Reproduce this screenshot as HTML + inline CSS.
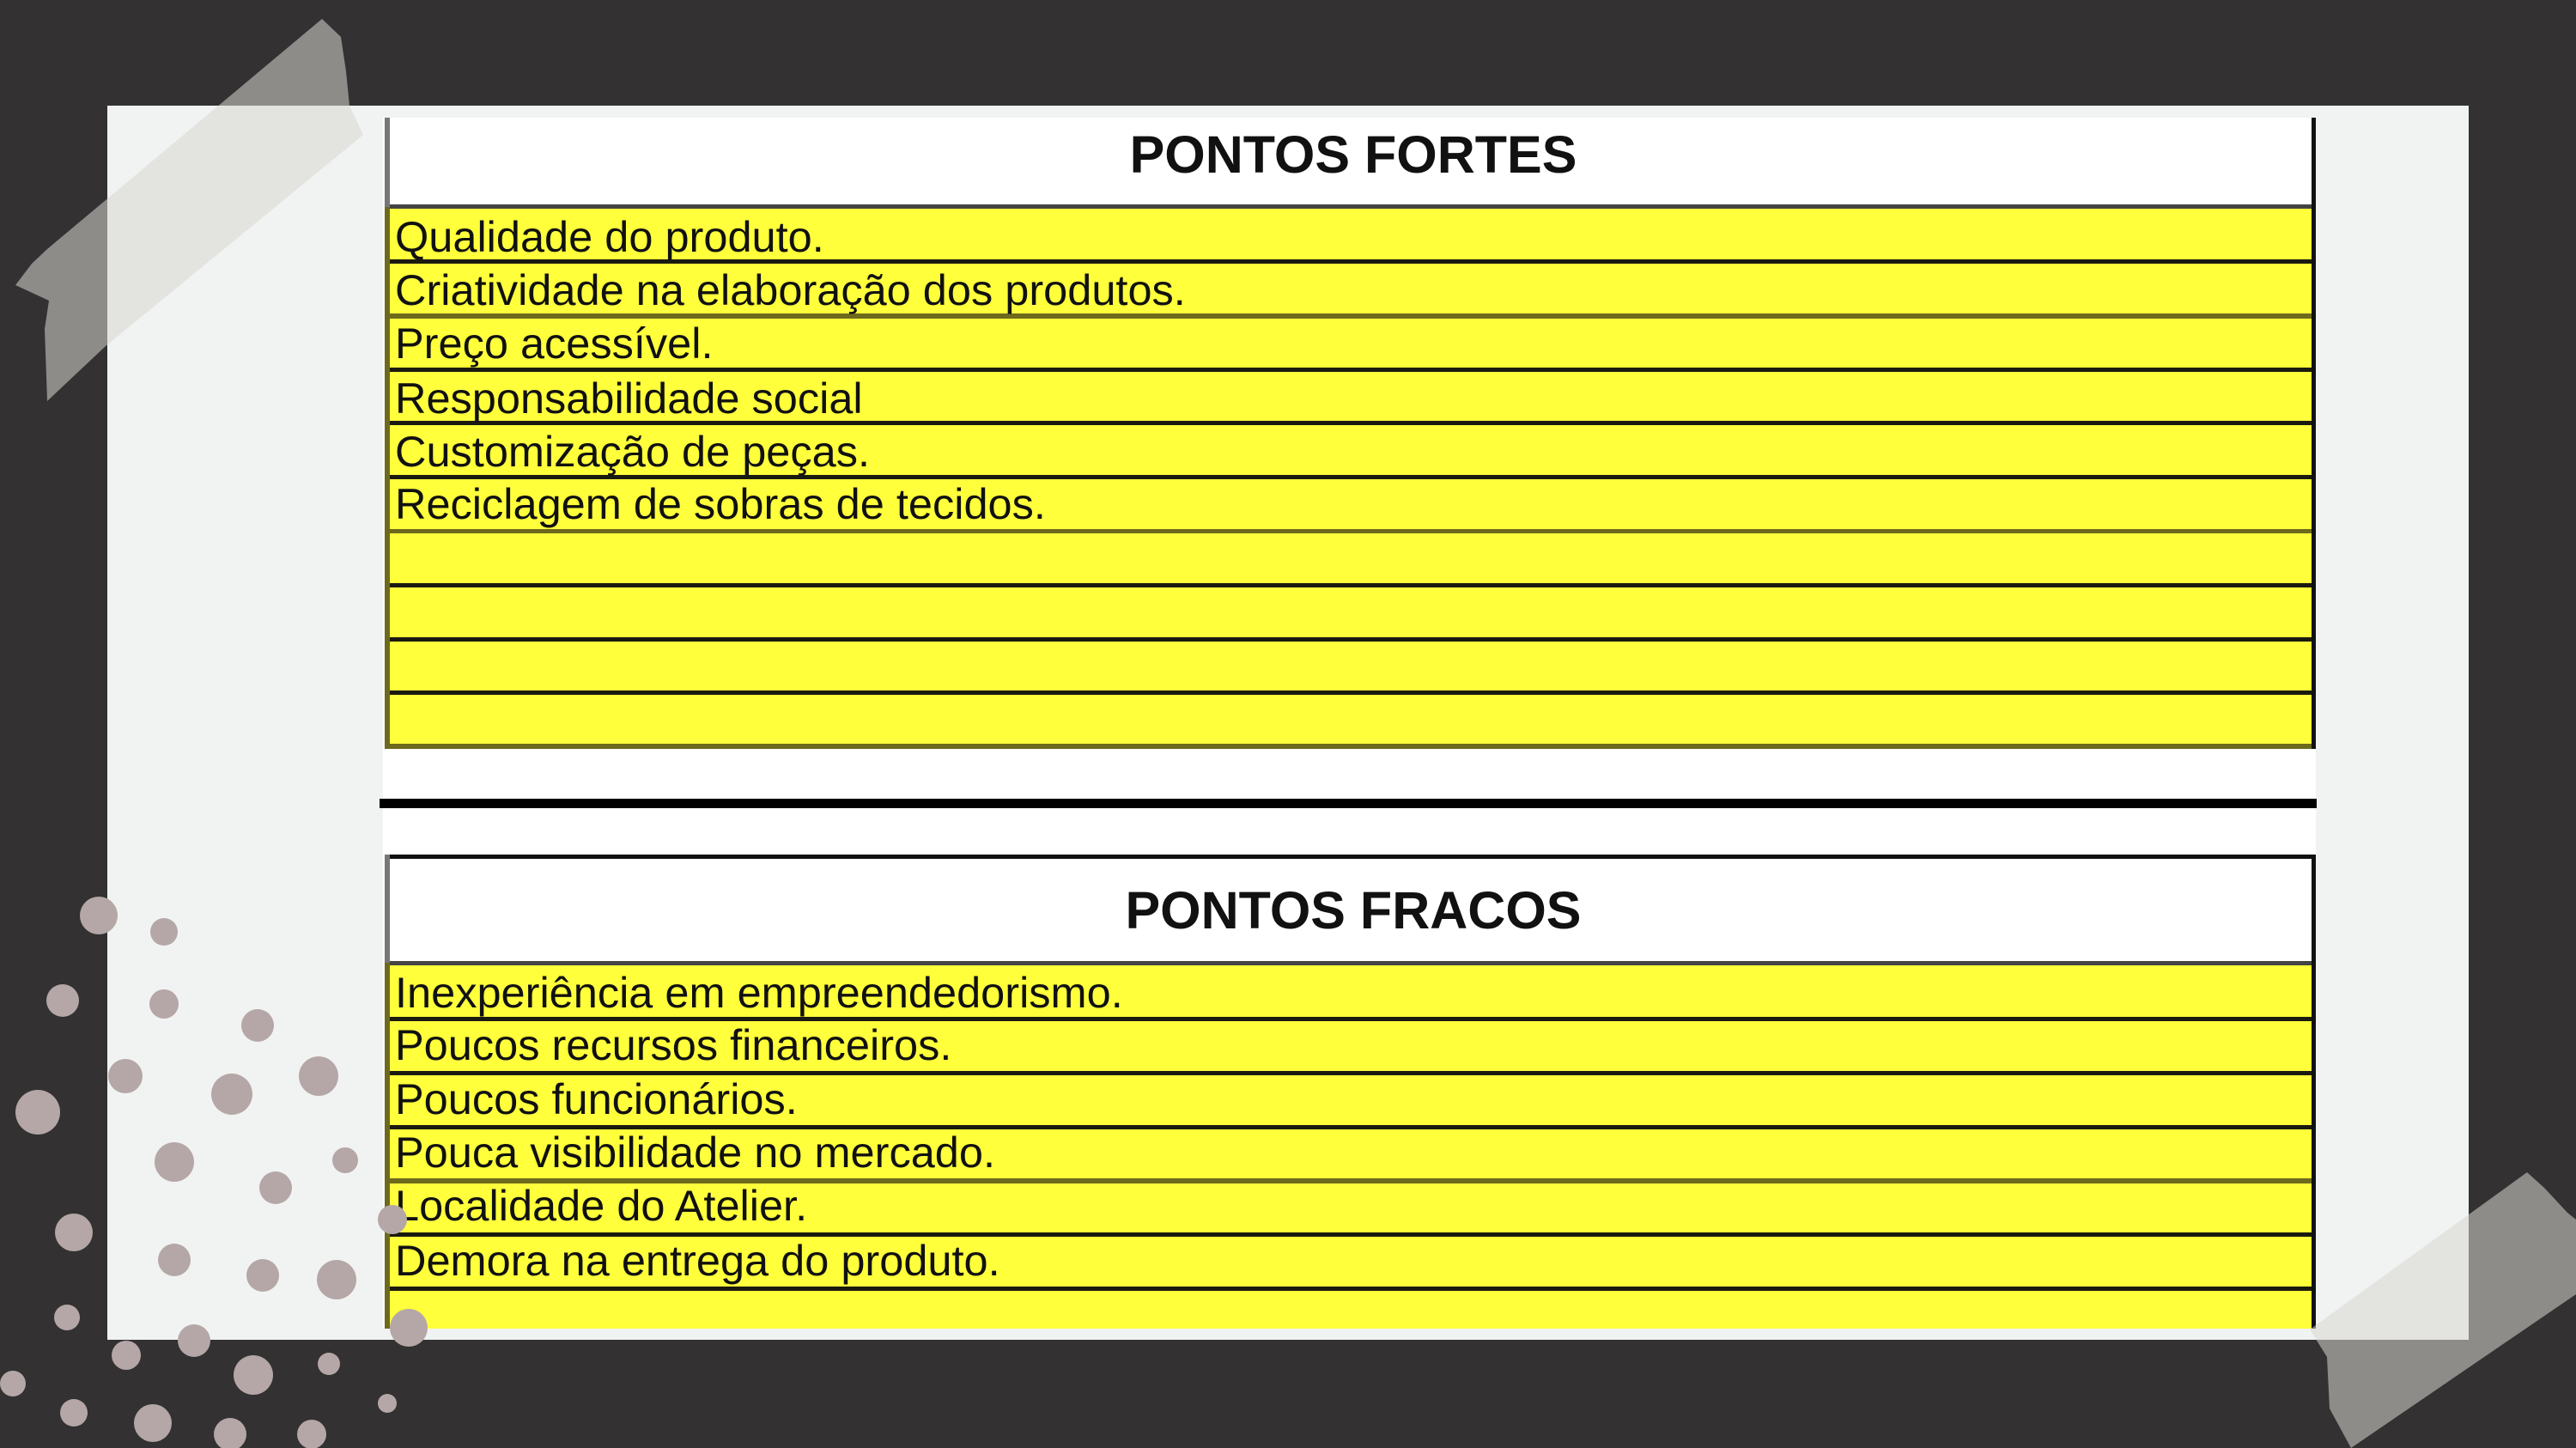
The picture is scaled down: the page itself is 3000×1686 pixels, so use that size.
<!DOCTYPE html>
<html><head><meta charset="utf-8"><style>
html,body{margin:0;padding:0;background:#333131;}
svg{display:block;}
text{font-family:"Liberation Sans",Arial,sans-serif;fill:#111;}
</style></head><body>
<svg width="3000" height="1686" viewBox="0 0 3000 1686" xmlns="http://www.w3.org/2000/svg">
<rect width="3000" height="1686" fill="#333131"/>
<rect x="125" y="123" width="2750" height="1437" fill="#f1f3f2"/>
<rect x="446" y="137" width="2251" height="1410" fill="#fff"/>
<rect x="448" y="241" width="2249" height="631" fill="#ffff3c"/>
<g fill="#1a1a10">
<rect x="448" y="238" width="2249" height="5" fill="#444"/>
<rect x="448" y="302" width="2249" height="5"/>
<rect x="448" y="365" width="2249" height="6" fill="#6e6a1c"/>
<rect x="448" y="428" width="2249" height="5"/>
<rect x="448" y="490" width="2249" height="5"/>
<rect x="448" y="553" width="2249" height="5"/>
<rect x="448" y="616" width="2249" height="5" fill="#6e6a1c"/>
<rect x="448" y="679" width="2249" height="5"/>
<rect x="448" y="742" width="2249" height="5"/>
<rect x="448" y="804" width="2249" height="5"/>
<rect x="448" y="866" width="2249" height="6" fill="#6e6a1c"/>
</g>
<rect x="448" y="137" width="6" height="104" fill="#777"/>
<rect x="448" y="241" width="6" height="631" fill="#6e6a1c"/>
<rect x="2692" y="137" width="5" height="735" fill="#111"/>
<text x="1576" y="201" font-size="61" font-weight="bold" text-anchor="middle">PONTOS FORTES</text>
<g font-size="50.5">
<text x="460" y="293">Qualidade do produto.</text>
<text x="460" y="355">Criatividade na elaboração dos produtos.</text>
<text x="460" y="417">Preço acessível.</text>
<text x="460" y="481">Responsabilidade social</text>
<text x="460" y="543">Customização de peças.</text>
<text x="460" y="604">Reciclagem de sobras de tecidos.</text>
</g>
<rect x="442" y="930" width="2256" height="11" fill="#000"/>
<rect x="448" y="995" width="2249" height="5" fill="#111"/>
<rect x="448" y="1121" width="2249" height="426" fill="#ffff3c"/>
<g fill="#1a1a10">
<rect x="448" y="1119" width="2249" height="5" fill="#444"/>
<rect x="448" y="1184" width="2249" height="5"/>
<rect x="448" y="1247" width="2249" height="5"/>
<rect x="448" y="1310" width="2249" height="5"/>
<rect x="448" y="1372" width="2249" height="6" fill="#6e6a1c"/>
<rect x="448" y="1435" width="2249" height="5"/>
<rect x="448" y="1498" width="2249" height="5"/>
</g>
<rect x="448" y="995" width="6" height="126" fill="#777"/>
<rect x="448" y="1121" width="6" height="426" fill="#6e6a1c"/>
<rect x="2692" y="995" width="5" height="552" fill="#111"/>
<text x="1576" y="1081" font-size="61" font-weight="bold" text-anchor="middle">PONTOS FRACOS</text>
<g font-size="50.5">
<text x="460" y="1173">Inexperiência em empreendedorismo.</text>
<text x="460" y="1234">Poucos recursos financeiros.</text>
<text x="460" y="1297">Poucos funcionários.</text>
<text x="460" y="1359">Pouca visibilidade no mercado.</text>
<text x="460" y="1421">Localidade do Atelier.</text>
<text x="460" y="1485">Demora na entrega do produto.</text>
</g>
<polygon points="375,22 397,43 403,83 407,123 423,157 123,403 55,467 52,383 57,350 18,332 37,307 55,290" fill="rgb(215,215,210)" fill-opacity="0.55"/>
<polygon points="2690,1548 2943,1365 2963,1383 2990,1412 3000,1420 3000,1507 2738,1686 2713,1640 2710,1580" fill="rgb(215,215,210)" fill-opacity="0.55"/>
<g fill="#b5a7a7">
<circle cx="115" cy="1066" r="22"/><circle cx="191" cy="1085" r="16"/>
<circle cx="73" cy="1165" r="19"/><circle cx="191" cy="1169" r="17"/>
<circle cx="300" cy="1194" r="19"/><circle cx="146" cy="1253" r="20"/>
<circle cx="270" cy="1274" r="24"/><circle cx="371" cy="1253" r="23"/>
<circle cx="44" cy="1295" r="26"/><circle cx="203" cy="1353" r="23"/>
<circle cx="321" cy="1383" r="19"/><circle cx="402" cy="1351" r="15"/>
<circle cx="86" cy="1435" r="22"/><circle cx="203" cy="1467" r="19"/>
<circle cx="306" cy="1485" r="19"/><circle cx="392" cy="1490" r="23"/>
<circle cx="457" cy="1420" r="17"/><circle cx="78" cy="1534" r="15"/>
<circle cx="147" cy="1578" r="17"/><circle cx="226" cy="1561" r="19"/>
<circle cx="295" cy="1601" r="23"/><circle cx="383" cy="1588" r="13"/>
<circle cx="476" cy="1546" r="22"/><circle cx="15" cy="1611" r="15"/>
<circle cx="86" cy="1645" r="16"/><circle cx="178" cy="1657" r="22"/>
<circle cx="268" cy="1670" r="19"/><circle cx="363" cy="1670" r="17"/>
<circle cx="451" cy="1634" r="11"/>
</g>
</svg>
</body></html>
